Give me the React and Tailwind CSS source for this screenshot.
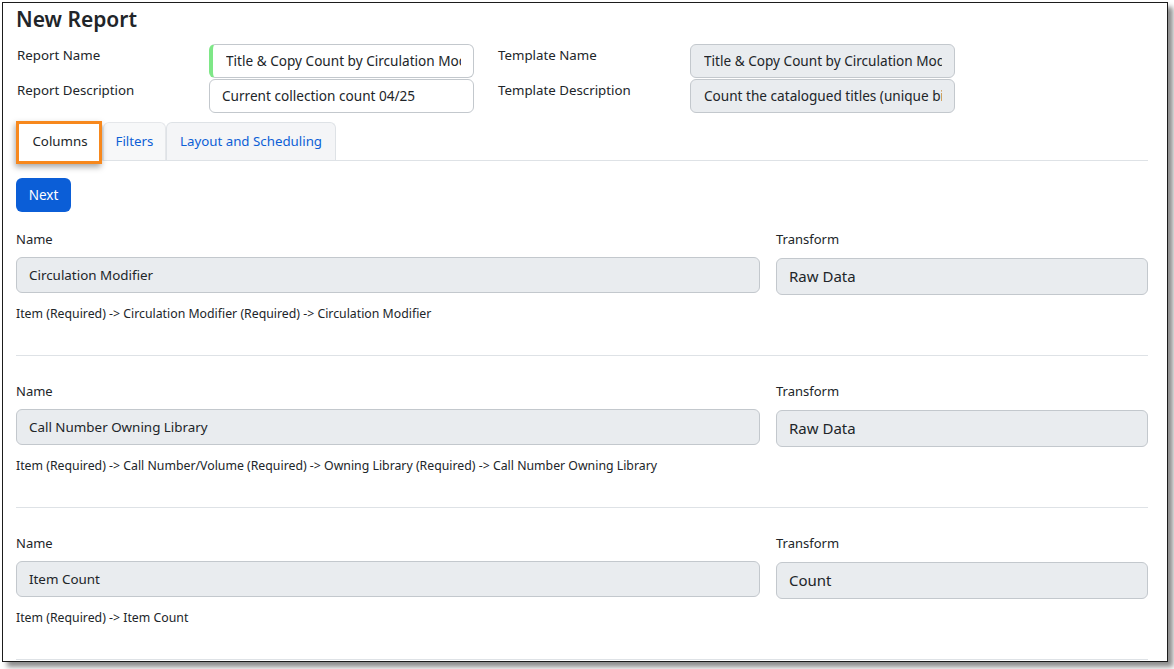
import React from 'react'

const sections = [
    {
        name: 'Circulation Modifier',
        transform: 'Raw Data',
        path: 'Item (Required) -> Circulation Modifier (Required) -> Circulation Modifier',
    },
    {
        name: 'Call Number Owning Library',
        transform: 'Raw Data',
        path: 'Item (Required) -> Call Number/Volume (Required) -> Owning Library (Required) -> Call Number Owning Library',
    },
    {
        name: 'Item Count',
        transform: 'Count',
        path: 'Item (Required) -> Item Count',
    },
]

function HeaderField({ label, value, grey, accent }) {
    return (
        <div className="flex items-start">
            <div className="w-[192px] pt-[1px] text-[13.3px] leading-[20px]">{label}</div>
            <div
                className={
                    'h-[34px] w-[265px] rounded-[6px] border border-[#c3c8cd] pr-[12px] text-[13.6px] leading-[32px] ' +
                    (grey ? 'bg-[#e9ecef] pl-[13px]' : 'bg-white pl-[12px]') +
                    (accent ? ' border-l-[4px] border-l-[#7ee787] pl-[13px]' : '')
                }
            >
                <div className="overflow-hidden whitespace-nowrap">{value}</div>
            </div>
        </div>
    )
}

function ColumnSection({ name, transform, path, first }) {
    return (
        <div className={'border-b border-[#dee2e6] pb-[33px] ' + (first ? 'pt-[17px]' : 'pt-[25px]')}>
            <div className="grid grid-cols-[2fr_1fr] gap-[16px]">
                <div>
                    <div className="text-[13px] leading-[20px]">Name</div>
                    <div className="mt-[8px] h-[36px] rounded-[6px] border border-[#c3c8cd] bg-[#e9ecef] pl-[12px] text-[13.4px] leading-[34px]">
                        {name}
                    </div>
                </div>
                <div>
                    <div className="text-[13px] leading-[20px]">Transform</div>
                    <div className="mt-[9px] h-[37px] rounded-[6px] border border-[#c3c8cd] bg-[#e9ecef] pl-[12px] text-[15px] leading-[35px]">
                        {transform}
                    </div>
                </div>
            </div>
            <div className="mt-[11px] text-[12.3px] leading-[16px]">{path}</div>
        </div>
    )
}

export default function App() {
    return (
        <div className="h-[669px] w-[1174px] bg-white font-['Noto_Sans',sans-serif] text-[#212529]">
            <div className="ml-[2px] mt-[2px] h-[660px] w-[1166px] overflow-hidden border border-[#1c1c1c] bg-white pl-[13px] pr-[19px] shadow-[5px_5px_5px_rgba(0,0,0,0.45)]">
                <h1 className="mt-[2px] text-[21px] font-semibold leading-[28px]">New Report</h1>

                <div className="mt-[11px] flex gap-[24px]">
                    <div className="flex flex-col gap-[1px] pl-[1px]">
                        <HeaderField label="Report Name" value="Title & Copy Count by Circulation Modifier" accent />
                        <HeaderField label="Report Description" value="Current collection count 04/25" />
                    </div>
                    <div className="flex flex-col gap-[1px]">
                        <HeaderField label="Template Name" value="Title & Copy Count by Circulation Modifier" grey />
                        <HeaderField label="Template Description" value="Count the catalogued titles (unique bibs) and copies" grey />
                    </div>
                </div>

                <div className="mt-[9px] flex items-end border-b border-[#dee2e6] pl-[1px]">
                    <div className="relative -mb-px flex h-[39px] w-[86px] items-center justify-center rounded-t-[6px] border border-[#dee2e6] border-b-white bg-white text-[13.3px]">
                        <div className="absolute -left-[2px] -top-[2px] h-[43px] w-[86px] border-[3px] border-[#f7881d] shadow-[-1px_3px_6px_rgba(0,0,0,0.35)]" />
                        Columns
                    </div>
                    <div className="flex h-[38px] w-[63px] items-center justify-center rounded-t-[6px] border border-b-0 border-[#e5e7ea] bg-[#f7f8f9] text-[13.3px] text-[#0d5fd6]">
                        Filters
                    </div>
                    <div className="flex h-[38px] w-[170px] items-center justify-center rounded-t-[6px] border border-b-0 border-[#dee2e6] bg-[#f4f5f7] text-[13.3px] text-[#0d5fd6]">
                        Layout and Scheduling
                    </div>
                </div>

                <button className="mt-[17px] h-[34px] w-[55px] rounded-[6px] bg-[#0b5ed7] text-[13.5px] text-white">
                    Next
                </button>

                <div>
                    {sections.map((s, i) => (
                        <ColumnSection key={s.name} first={i === 0} {...s} />
                    ))}
                </div>
            </div>
        </div>
    )
}
